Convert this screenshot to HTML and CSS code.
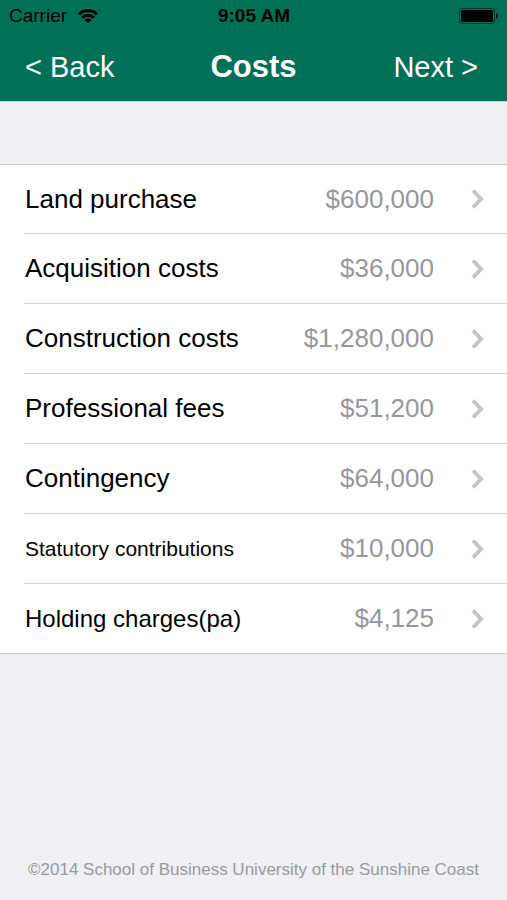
FILE: index.html
```html
<!DOCTYPE html>
<html lang="en">
<head>
<meta charset="utf-8">
<meta name="viewport" content="width=device-width, initial-scale=1">
<title>Costs</title>
<link rel="stylesheet" href="styles.css">
</head>
<body>
<header class="top">
  <div class="status">
    <div class="carrier"><span>Carrier</span>
      <svg class="wifi" viewBox="0 0 20 14" aria-hidden="true"><path d="M1 5.3a12.8 12.8 0 0 1 18 0"/><path d="M4.3 8.7a8.1 8.1 0 0 1 11.4 0"/><path class="dot" d="M10 14 6.6 10.9a4.8 4.8 0 0 1 6.8 0Z"/></svg>
    </div>
    <time class="clock">9:05 AM</time>
    <svg class="battery" viewBox="0 0 40 16" aria-hidden="true"><rect class="shell" x=".5" y=".5" width="35" height="15" rx="2.5"/><rect x="2" y="2" width="32" height="12" rx="1.5"/><path d="M37 5q2 1 2 3t-2 3Z"/></svg>
  </div>
  <nav class="bar">
    <button class="nav-button" type="button">&lt; Back</button>
    <h1 class="title">Costs</h1>
    <button class="nav-button next" type="button">Next &gt;</button>
  </nav>
</header>
<main class="content">
  <ul class="list">
    <li><a class="row" href="#"><span class="label">Land purchase</span><span class="value">$600,000</span><svg class="chevron" viewBox="0 0 14 20" aria-hidden="true"><path d="M2 1.5 10 10 2 18.5"/></svg></a></li>
    <li><a class="row" href="#"><span class="label">Acquisition costs</span><span class="value">$36,000</span><svg class="chevron" viewBox="0 0 14 20" aria-hidden="true"><path d="M2 1.5 10 10 2 18.5"/></svg></a></li>
    <li><a class="row" href="#"><span class="label">Construction costs</span><span class="value">$1,280,000</span><svg class="chevron" viewBox="0 0 14 20" aria-hidden="true"><path d="M2 1.5 10 10 2 18.5"/></svg></a></li>
    <li><a class="row" href="#"><span class="label">Professional fees</span><span class="value">$51,200</span><svg class="chevron" viewBox="0 0 14 20" aria-hidden="true"><path d="M2 1.5 10 10 2 18.5"/></svg></a></li>
    <li><a class="row" href="#"><span class="label">Contingency</span><span class="value">$64,000</span><svg class="chevron" viewBox="0 0 14 20" aria-hidden="true"><path d="M2 1.5 10 10 2 18.5"/></svg></a></li>
    <li><a class="row" href="#"><span class="label small">Statutory contributions</span><span class="value">$10,000</span><svg class="chevron" viewBox="0 0 14 20" aria-hidden="true"><path d="M2 1.5 10 10 2 18.5"/></svg></a></li>
    <li><a class="row" href="#"><span class="label medium">Holding charges(pa)</span><span class="value">$4,125</span><svg class="chevron" viewBox="0 0 14 20" aria-hidden="true"><path d="M2 1.5 10 10 2 18.5"/></svg></a></li>
  </ul>
</main>
<footer class="footer">©2014 School of Business University of the Sunshine Coast</footer>
</body>
</html>
```

FILE: styles.css
```css
* {
  box-sizing: border-box;
}

body {
  display: flex;
  flex-direction: column;
  min-height: 100vh;
  margin: 0;
  background: #efeff4;
  color: #000;
  font-family: "Liberation Sans", Arial, sans-serif;
}

.top {
  padding-bottom: 16px;
  border-bottom: 1px solid #b4cfcc;
  background: #007057;
}

.status {
  display: grid;
  grid-template-columns: 1fr auto 1fr;
  align-items: center;
  height: 32px;
  padding: 0 8px 0 9px;
  font-size: 19px;
}

.carrier {
  display: flex;
  align-items: center;
  gap: 11px;
}

.wifi {
  width: 20px;
  height: 14px;
  fill: none;
  stroke: #000;
  stroke-width: 3;
}

.wifi .dot {
  fill: #000;
  stroke: none;
}

.clock {
  font-weight: bold;
}

.battery {
  justify-self: end;
  width: 40px;
  height: 16px;
}

.battery .shell {
  fill: none;
  stroke: #003a2d;
}

.bar {
  display: grid;
  grid-template-columns: 1fr auto 1fr;
  align-items: center;
  height: 53px;
  padding: 16px 25px 0;
}

.nav-button {
  justify-self: start;
  padding: 0;
  border: 0;
  background: none;
  color: #fff;
  font: inherit;
  font-size: 29px;
  line-height: 36px;
}

.next {
  justify-self: end;
  margin-right: 4px;
}

.title {
  margin: 0;
  color: #fff;
  font-size: 31px;
  line-height: 36px;
}

.content {
  flex: 1;
  padding-top: 62px;
}

.list {
  margin: 0;
  padding: 0;
  border: solid #c8c7cc;
  border-width: 1px 0;
  background: #fff;
  list-style: none;
}

.row {
  display: flex;
  align-items: center;
  height: 70px;
  margin-left: 24px;
  padding: 0 22px 0 1px;
  border-bottom: 1px solid #d2d1d5;
  color: inherit;
  font-size: 26px;
  text-decoration: none;
}

li:first-child .row,
li:last-child .row {
  height: 69px;
}

li:last-child .row {
  border-bottom: 0;
}

.label {
  flex: 1;
}

.small {
  font-size: 21px;
}

.medium {
  font-size: 24px;
}

.value {
  color: #97979b;
}

.chevron {
  width: 14px;
  height: 20px;
  margin-left: 37px;
  fill: none;
  stroke: #c5c5c8;
  stroke-width: 4;
}

.footer {
  padding: 0 0 20px;
  color: #9a9a9e;
  font-size: 17px;
  line-height: 20px;
  text-align: center;
}
```
